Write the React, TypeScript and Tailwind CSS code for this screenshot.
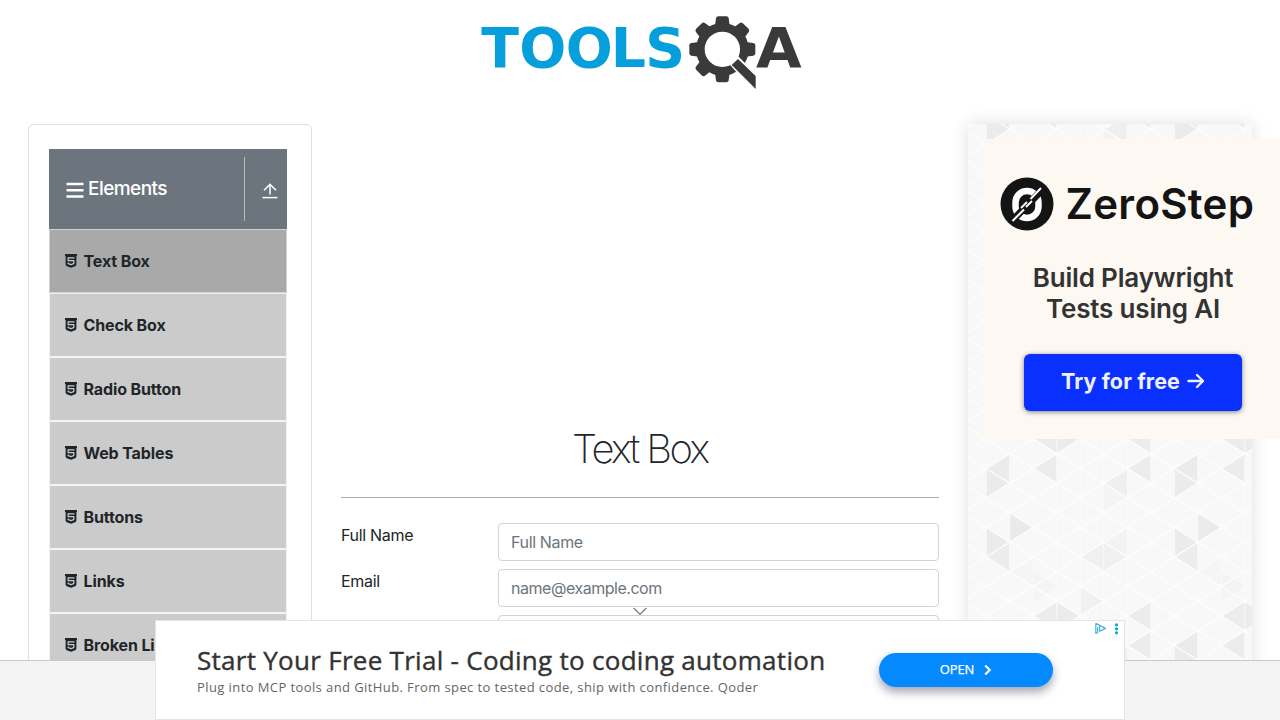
import React from 'react';

type Direction = 'left' | 'right';
type Tile = { strip: number; dir: Direction; tipY: number; fill: string };

const COLUMN = 23.5;
const STEP = 29.5;
const ORIGIN_X = 18.3;
const ORIGIN_Y = 433;

const dark: [number, Direction, number, string][] = [
  [0, 'right', -2.5, '#ebebeb'],
  [5, 'left', -2.5, '#efefef'],
  [1, 'right', -1, '#eaeaea'],
  [0, 'right', -0.5, '#ebebeb'],
  [0, 'left', 0, '#ececec'],
  [4, 'left', 0, '#f0f0f0'],
  [5, 'right', 0, '#f0f0f0'],
  [5, 'left', -0.5, '#f3f3f3'],
  [4, 'right', 1.5, '#f1f1f1'],
  [2, 'left', 2, '#ececec'],
  [3, 'right', 2, '#ebebeb'],
  [6, 'left', 2, '#ececec'],
  [0, 'left', 3, '#ebebeb'],
  [2, 'left', 3, '#ececec'],
  [6, 'left', 3, '#ececec'],
  [0, 'right', 3.5, '#ebebeb'],
  [1, 'left', 0.5, '#f5f5f5'],
  [2, 'right', 1, '#f4f4f4'],
  [5, 'right', -2, '#f4f4f4'],
];

function buildTiles(): Tile[] {
  const tiles: Tile[] = [];
  for (let period = -3; period <= 1; period++) {
    for (const shift of [-8, 0, 8]) {
      for (const [strip, dir, row, fill] of dark) {
        tiles.push({ strip: strip + shift, dir, tipY: ORIGIN_Y + (row + period * 6) * STEP, fill });
      }
    }
  }
  return tiles.filter((t) => t.strip >= -1 && t.strip <= 11);
}

function trianglePoints(t: Tile): string {
  const x0 = ORIGIN_X + t.strip * COLUMN;
  const x1 = x0 + COLUMN;
  const tip = t.dir === 'right' ? x1 : x0;
  const base = t.dir === 'right' ? x0 : x1;
  return `${tip},${t.tipY} ${base},${t.tipY - STEP / 2} ${base},${t.tipY + STEP / 2}`;
}

function TrianglePattern() {
  const slope = STEP / 2 / COLUMN;
  const diagonals = Array.from({ length: 34 }, (_, i) => ORIGIN_Y + (i - 22) * STEP);
  const columns = Array.from({ length: 13 }, (_, i) => ORIGIN_X + i * COLUMN);
  return (
    <svg className="absolute inset-0" width="284" height="596" viewBox="0 0 284 596">
      <rect width="284" height="596" fill="#f8f8f8" />
      {buildTiles().map((t, i) => (
        <polygon key={i} points={trianglePoints(t)} fill={t.fill} />
      ))}
      <g stroke="#fdfdfd" strokeWidth="1.3">
        {columns.map((x) => (
          <line key={x} x1={x} y1="0" x2={x} y2="596" strokeWidth="0.8" />
        ))}
        {diagonals.map((y) => (
          <React.Fragment key={y}>
            <line x1="0" y1={y - ORIGIN_X * slope} x2="284" y2={y + (284 - ORIGIN_X) * slope} />
            <line x1="0" y1={y + ORIGIN_X * slope} x2="284" y2={y - (284 - ORIGIN_X) * slope} />
          </React.Fragment>
        ))}
      </g>
    </svg>
  );
}

function ToolsQaLogo() {
  const teeth = [0, 45, 90, 180, 225, 270, 315];
  return (
    <svg width="345" height="110" viewBox="0 0 1035 330" className="block">
      <g fontFamily="'DejaVu Sans', sans-serif" fontWeight="700" fontSize="166">
        <text x="34 148 287 422 526" y="201" fill="#069fdc">TOOLS</text>
      </g>
      <g fill="#3a3a3c">
        {teeth.map((a) => (
          <path key={a} transform={`rotate(${a} 757 148)`} d="M734 84 L738 55 Q739 49 745 49 H769 Q775 49 776 55 L780 84 Z" />
        ))}
      </g>
      <circle cx="757" cy="148" r="66" fill="none" stroke="#3a3a3c" strokeWidth="26" />
      <path d="M776 190 L800 164 L880 244 L857 282 Z" fill="#ffffff" />
      <path d="M785 195 L804 177 L857 228 V267 Z" fill="#3a3a3c" />
      <text x="858" y="201" fontFamily="'DejaVu Sans', sans-serif" fontWeight="700" fontSize="166" textLength="137" lengthAdjust="spacingAndGlyphs" fill="#3a3a3c">A</text>
    </svg>
  );
}

function ShieldIcon() {
  return (
    <svg width="12" height="14" viewBox="0 0 12 14" className="block shrink-0">
      <path d="M0 0H12V1.9H11.4V10.6Q11.3 11.7 10.3 12.2L6 13.8L1.7 12.2Q0.7 11.7 0.6 10.6V1.9H0Z" fill="#212529" />
      <path d="M9.4 3.9H3.2V6.7H8.8V9.5L6 10.5L3.2 9.5V8.6" fill="none" stroke="#cccccc" strokeWidth="1.2" />
    </svg>
  );
}

const menu = ['Text Box', 'Check Box', 'Radio Button', 'Web Tables', 'Buttons', 'Links', 'Broken Links - Images'];

function Sidebar() {
  return (
    <aside className="h-[620px] w-[283.5px] shrink-0 rounded-md border border-[#dfdfdf] px-[20px] pt-[24px]">
      <div className="flex h-20 w-[238px] items-center bg-[#6c757d] text-white">
        <svg width="18" height="16" viewBox="0 0 18 16" className="ml-[17px] mt-px shrink-0">
          <path d="M0.5 2H17.5M0.5 8.2H17.5M0.5 14.4H17.5" stroke="#fff" strokeWidth="2.5" />
        </svg>
        <span className="ml-[4px] w-[156px] text-[19px] font-medium tracking-[-0.55px]">Elements</span>
        <span className="h-16 w-px shrink-0 bg-[#bdbcb9]" />
        <svg width="16" height="16" viewBox="0 0 16 16" className="ml-[16.5px] mt-[4px] shrink-0" fill="none" stroke="#fff">
          <path d="M8 11.5V1.5M2 7.2L8 1.2L14 7.2" strokeWidth="1.5" />
          <path d="M0.5 14.6H15.5" strokeWidth="1.5" />
        </svg>
      </div>
      <ul className="w-[238px]">
        {menu.map((label, i) => (
          <li
            key={label}
            className={
              'flex h-16 items-center gap-[7px] border pl-[14.5px] text-base font-bold tracking-[-0.12px] whitespace-nowrap text-[#212529] ' +
              (i === 0 ? 'border-[#ced2d7] bg-[#a9a9a9]' : 'border-[#f3f3f3] bg-[#cbcbcb]')
            }
          >
            <ShieldIcon />
            <span>{label}</span>
          </li>
        ))}
      </ul>
    </aside>
  );
}

function TextBoxForm() {
  const field = 'block h-[38px] w-[440.5px] rounded border border-[#ced4da] bg-white px-3 text-base tracking-[-0.35px] placeholder:text-[#6c757d] placeholder:opacity-100';
  return (
    <main className="ml-[29.5px] w-[597.5px] shrink-0 pt-[301px] text-[#212529]">
      <h1 className="text-center text-[40px] leading-[48px] font-extralight tracking-[-2.6px]">Text Box</h1>
      <hr className="mt-[24px] border-[#a9abad]" />
      <form className="mt-[25px] flex flex-col gap-2">
        <div className="flex justify-between">
          <label className="text-base tracking-[-0.3px]">Full Name</label>
          <input className={field} placeholder="Full Name" />
        </div>
        <div className="flex justify-between">
          <label className="text-base tracking-[-0.3px]">Email</label>
          <input className={field + ' placeholder:tracking-[-0.47px]'} placeholder="name@example.com" />
        </div>
        <div className="flex justify-end">
          <textarea className={field} />
        </div>
      </form>
    </main>
  );
}

function ZeroStepCard() {
  return (
    <div className="relative flex h-[300px] w-[300px] flex-col bg-[#fdf8f2] pt-[38px]">
      <div className="flex h-[54px] items-center pl-4">
        <svg width="54" height="54" viewBox="0 0 54 54" className="shrink-0">
          <circle cx="27" cy="27" r="26.5" fill="#141414" />
          <rect x="15.5" y="14" width="23" height="27" rx="11.5" fill="none" stroke="#fff" strokeWidth="6.5" />
          <path d="M10 46L44 11" stroke="#141414" strokeWidth="7" />
          <path d="M12.5 44L24 32.5M30.5 22L41 11" stroke="#fff" strokeWidth="2" />
          <path d="M21 31L27 25M26 30L32 24" stroke="#fff" strokeWidth="1.8" />
        </svg>
        <span className="ml-[11.5px] text-[42px] leading-[54px] font-semibold tracking-[0.3px] text-[#141414]">ZeroStep</span>
      </div>
      <div className="mt-[30.5px] pr-[2px] text-center text-[26px] leading-[31px] font-semibold tracking-[-0.18px] text-[#333]">
        Build Playwright
        <br />
        Tests using AI
      </div>
      <div className="mt-[30px] ml-[40px] flex h-[57px] w-[218px] items-center justify-center rounded-md bg-[#0a30ff] pb-[2px] text-[21.5px] font-bold tracking-[0.1px] text-[#eef0ff] shadow-[0_1px_5px_rgba(0,0,0,0.5)]">
        Try for free
        <svg width="18" height="16" viewBox="0 0 18 16" className="ml-[7px]" fill="none" stroke="#eef0ff" strokeWidth="2.4" strokeLinecap="round" strokeLinejoin="round">
          <path d="M1.5 8H16M10 2L16 8L10 14" />
        </svg>
      </div>
    </div>
  );
}

function BottomAd() {
  return (
    <section className="absolute top-[620px] left-[155px] flex h-[100px] w-[970px] border border-[#e5e5e5] bg-white font-['Open_Sans',sans-serif]">
      <div className="w-[723px] shrink-0 pt-[21px] pl-[41px] whitespace-nowrap">
        <div className="text-[26px] leading-[37px] font-normal tracking-[0.28px] text-[#333] [-webkit-text-stroke:0.4px_#333]">Start Your Free Trial - Coding to coding automation</div>
        <div className="text-[13px] leading-[17px] tracking-[0.41px] text-[#666]">
          Plug into MCP tools and GitHub. From spec to tested code, ship with confidence. Qoder
        </div>
      </div>
      <div className="mt-[32px] flex h-[34px] w-[174px] shrink-0 items-center justify-center rounded-full bg-[#0489ff] text-[13px] tracking-[-0.1px] text-white shadow-[0_5px_10px_rgba(30,40,70,0.42)] [-webkit-text-stroke:0.25px_#fff]">
        OPEN
        <svg width="8" height="12" viewBox="0 0 8 12" className="ml-[10px]" fill="none" stroke="#fff" strokeWidth="2.1">
          <path d="M1.2 1.4L5.8 6L1.2 10.6" />
        </svg>
      </div>
      <svg width="32" height="16" viewBox="0 0 32 16" className="ml-[39px] shrink-0">
        <path d="M3.8 2.2V12.2L5.6 11.8V6.2M3.8 2.2L13.4 7.4L7.6 10.2V5" fill="none" stroke="#45afe0" strokeWidth="1.2" strokeLinejoin="round" />
        <g fill="#00aecd">
          <circle cx="24.5" cy="3.8" r="1.6" />
          <circle cx="24.5" cy="7.8" r="1.6" />
          <circle cx="24.5" cy="11.8" r="1.6" />
        </g>
      </svg>
    </section>
  );
}

export default function App() {
  return (
    <div className="relative h-[720px] w-[1280px] overflow-hidden bg-white font-[Inter,sans-serif]">
      <header className="flex h-[124px] pl-[470px]">
        <ToolsQaLogo />
      </header>
      <div className="flex h-[596px] pl-[28px]">
        <Sidebar />
        <TextBoxForm />
        <aside className="relative ml-[29.5px] h-[620px] w-[284px] shrink-0 pt-[15px] pl-4 shadow-[0_0_16px_rgba(0,0,0,0.13)]">
          <TrianglePattern />
          <ZeroStepCard />
        </aside>
      </div>
      <svg width="14" height="9" viewBox="0 0 14 9" className="absolute top-[607px] left-[633px]">
        <path d="M0.7 1L7 7.3L13.3 1" fill="none" stroke="#777" strokeWidth="1.2" />
      </svg>
      <footer className="absolute top-[660px] left-0 h-[60px] w-full border-t border-[#c8c8c8] bg-[#f4f4f4]" />
      <BottomAd />
    </div>
  );
}
